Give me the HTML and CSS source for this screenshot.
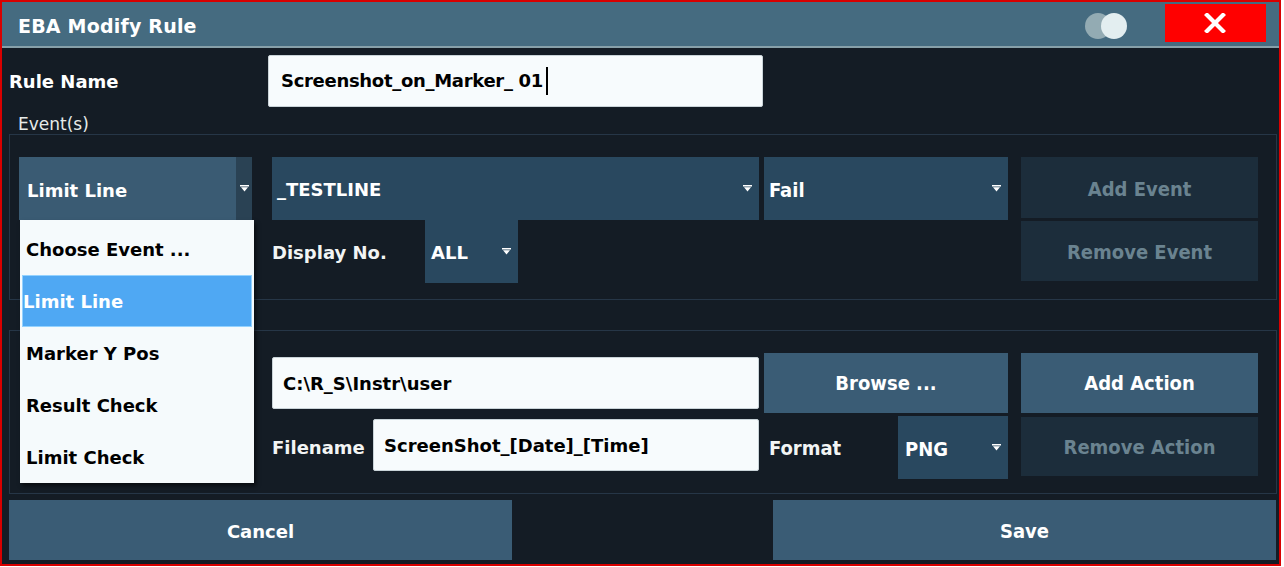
FILE: index.html
```html
<!DOCTYPE html>
<html lang="en">
<head>
<meta charset="utf-8">
<title>EBA Modify Rule</title>
<link rel="stylesheet" href="styles.css">
</head>
<body>
<div class="dialog">
  <div class="titlebar">
    <span class="title">EBA Modify Rule</span>
    <div class="title-tools">
      <svg class="toggle" width="46" height="28" viewBox="0 0 46 28">
        <circle cx="14" cy="14" r="13" fill="#93abb3"/>
        <circle cx="30" cy="14" r="13" fill="#e3eef0"/>
      </svg>
      <div class="close">
        <svg width="22" height="20" viewBox="0 0 22 20">
          <path d="M3 2 L19 18 M19 2 L3 18" stroke="#fff" stroke-width="4.2" stroke-linecap="square"/>
        </svg>
      </div>
    </div>
  </div>

  <div class="content">
    <div class="rule-row">
      <div class="rule-label">Rule Name</div>
      <div class="input rule-input">Screenshot_on_Marker_ 01<span class="caret"></span></div>
    </div>

    <div class="group-label">Event(s)</div>
    <div class="group">
      <div class="grid events-grid">
        <div class="dd dd-split c1">
          <div class="dd-main">Limit Line</div>
          <div class="dd-btn"><svg class="arrow" width="9" height="7" viewBox="0 0 9 7"><path d="M0 0H9V1.4H0Z M1 2.2H8L4.5 6.5Z" fill="#fff"/></svg></div>
        </div>
        <div class="dd c3">
          <span>_TESTLINE</span>
          <svg class="arrow" width="9" height="7" viewBox="0 0 9 7"><path d="M0 0H9V1.4H0Z M1 2.2H8L4.5 6.5Z" fill="#fff"/></svg>
        </div>
        <div class="dd cond c5">
          <span>Fail</span>
          <svg class="arrow" width="9" height="7" viewBox="0 0 9 7"><path d="M0 0H9V1.4H0Z M1 2.2H8L4.5 6.5Z" fill="#fff"/></svg>
        </div>
        <div class="btn disabled cond c7 add-event">Add Event</div>

        <div class="pair c3 r2">
          <div class="label display-label">Display No.</div>
          <div class="dd all-dd">
            <span>ALL</span>
            <svg class="arrow" width="9" height="7" viewBox="0 0 9 7"><path d="M0 0H9V1.4H0Z M1 2.2H8L4.5 6.5Z" fill="#fff"/></svg>
          </div>
        </div>
        <div class="btn disabled cond c7 r2 remove-event">Remove Event</div>
      </div>
    </div>

    <div class="group-gap"></div>
    <div class="group group-actions">
      <div class="grid actions-grid">
        <div class="input path-input c3">C:\R_S\Instr\user</div>
        <div class="btn cond c5">Browse ...</div>
        <div class="btn cond c7">Add Action</div>

        <div class="pair c3 r2">
          <div class="label filename-label">Filename</div>
          <div class="input filename-input">ScreenShot_[Date]_[Time]</div>
        </div>
        <div class="pair c5 r2">
          <div class="label cond format-label">Format</div>
          <div class="dd cond png-dd">
            <span>PNG</span>
            <svg class="arrow" width="9" height="7" viewBox="0 0 9 7"><path d="M0 0H9V1.4H0Z M1 2.2H8L4.5 6.5Z" fill="#fff"/></svg>
          </div>
        </div>
        <div class="btn disabled cond c7 r2 remove-action">Remove Action</div>
      </div>
    </div>

    <div class="footer">
      <div class="btn footer-btn">Cancel</div>
      <div class="btn cond footer-btn">Save</div>
    </div>
  </div>

  <div class="dropdown-list">
    <div class="item">Choose Event ...</div>
    <div class="item selected">Limit Line</div>
    <div class="item">Marker Y Pos</div>
    <div class="item">Result Check</div>
    <div class="item">Limit Check</div>
  </div>
</div>
</body>
</html>
```

FILE: styles.css
```css
html, body {
  margin: 0;
  padding: 0;
  background: #ffffff;
}

body {
  width: 1284px;
  height: 567px;
  overflow: hidden;
  font-family: "DejaVu Sans", "Liberation Sans", sans-serif;
  font-weight: bold;
  font-size: 18px;
  color: #ffffff;
}

.dialog {
  position: relative;
  box-sizing: border-box;
  width: 1281px;
  height: 566px;
  border: 2px solid #d80000;
  background: #141c25;
  display: flex;
  flex-direction: column;
}

.titlebar {
  height: 44px;
  border-bottom: 2px solid #87a0a9;
  background: #456b80;
  display: flex;
  align-items: center;
  padding-left: 16px;
  flex-shrink: 0;
}

.title {
  font-size: 19px;
  line-height: 22px;
  padding-top: 4px;
  color: #ffffff;
  letter-spacing: 0.2px;
}

.title-tools {
  margin-left: auto;
  display: flex;
  align-items: center;
}

.toggle {
  display: block;
  margin-top: 3px;
}

.close {
  margin-left: 35px;
  margin-right: 13px;
  width: 101px;
  height: 38px;
  margin-top: -2px;
  background: #ff0000;
  display: flex;
  align-items: center;
  justify-content: center;
}

.close svg {
  display: block;
  margin-left: -2px;
}

.content {
  padding: 0 2px 0 7px;
  display: flex;
  flex-direction: column;
}

.rule-row {
  margin-top: 7px;
  height: 51px;
  display: flex;
  align-items: center;
}

.rule-label {
  width: 259px;
  padding-top: 2px;
}

.input {
  box-sizing: border-box;
  background: #f7fbfd;
  color: #000000;
  border: 1px solid #c9d3d8;
  border-radius: 2px;
  display: flex;
  align-items: center;
}

.rule-input {
  width: 495px;
  height: 52px;
  padding-left: 12px;
  font-size: 18px;
  letter-spacing: -0.3px;
}

.caret {
  display: inline-block;
  width: 2px;
  height: 28px;
  background: #000;
  margin-left: 3px;
}

.group-label {
  height: 28px;
  padding-top: 8px;
  box-sizing: border-box;
  padding-left: 9px;
  font-weight: normal;
  font-size: 17px;
  line-height: 20px;
  color: #e6ebe9;
}

.group-gap {
  height: 30px;
}

.group {
  box-sizing: border-box;
  border: 1px solid #263647;
  padding: 22px 0 16px 9px;
}

.group-actions {
  padding-bottom: 14px;
}

.grid {
  display: grid;
  grid-template-columns: 233px 20px 487px 5px 244px 13px 237px;
}

.events-grid {
  grid-template-rows: 63px 63px;
}

.actions-grid {
  grid-template-rows: 60px 66px;
}

.c1 { grid-column: 1; grid-row: 1; }
.c3 { grid-column: 3; grid-row: 1; }
.c5 { grid-column: 5; grid-row: 1; }
.c7 { grid-column: 7; grid-row: 1; }
.r2 { grid-row: 2; }

.cond {
  font-family: "DejaVu Sans Condensed", "DejaVu Sans", sans-serif;
  font-stretch: condensed;
  font-size: 20px;
}

.dd {
  box-sizing: border-box;
  background: #29485f;
  display: flex;
  align-items: center;
  justify-content: space-between;
  padding: 0 7px 0 5px;
  color: #ffffff;
}

.dd span {
  padding-top: 2px;
}

.arrow {
  display: block;
  flex-shrink: 0;
}

.dd-split {
  padding: 0;
  background: #3a5b73;
}

.dd-main {
  flex: 1;
  padding-left: 8px;
  padding-top: 4px;
}

.dd-btn {
  width: 16px;
  height: 100%;
  background: #2a4254;
  display: flex;
  align-items: center;
  justify-content: center;
}

.btn {
  box-sizing: border-box;
  background: #3a5c75;
  color: #ffffff;
  display: flex;
  align-items: center;
  justify-content: center;
}

.btn.disabled {
  background: #1c2d3b;
  color: #6a8390;
}

.add-event {
  height: 61px;
  align-self: start;
  padding-top: 2px;
}

.remove-event {
  height: 60px;
  margin-top: 1px;
  align-self: start;
  padding-top: 2px;
}

.pair {
  display: flex;
  align-items: flex-start;
}

.label {
  display: flex;
  align-items: center;
  color: #f2f4f4;
}

.display-label {
  width: 153px;
  height: 63px;
  padding-top: 2px;
  box-sizing: border-box;
}

.all-dd {
  width: 93px;
  height: 63px;
  padding-left: 6px;
}

.path-input {
  width: 487px;
  height: 52px;
  align-self: center;
  padding-left: 10px;
}

.filename-input {
  width: 386px;
  height: 52px;
  margin-top: 6px;
  padding-left: 10px;
}

.filename-label {
  width: 101px;
  height: 66px;
  padding-top: 2px;
  box-sizing: border-box;
}

.format-label {
  width: 134px;
  height: 66px;
  padding-left: 5px;
  box-sizing: border-box;
  padding-top: 3px;
}

.png-dd {
  width: 110px;
  height: 63px;
  margin-top: 3px;
  padding-left: 7px;
}

.remove-action {
  height: 59px;
  margin-top: 4px;
  align-self: start;
}

.footer {
  margin-top: 6px;
  display: flex;
  justify-content: space-between;
  padding-right: 1px;
}

.footer-btn {
  width: 503px;
  height: 60px;
  padding-top: 2px;
}

.dropdown-list {
  position: absolute;
  left: 18px;
  top: 218px;
  width: 234px;
  height: 263px;
  box-sizing: border-box;
  padding: 3px 2px 0 2px;
  background: #f5fafc;
  box-shadow: 2px 3px 4px rgba(0, 0, 0, 0.55);
  color: #000000;
}

.item {
  height: 52px;
  box-sizing: border-box;
  display: flex;
  align-items: center;
  padding-left: 4px;
  padding-top: 1px;
}

.item.selected {
  background: #4fa8f3;
  border: 1px solid #93d2ff;
  color: #ffffff;
  padding-left: 0;
}
```
